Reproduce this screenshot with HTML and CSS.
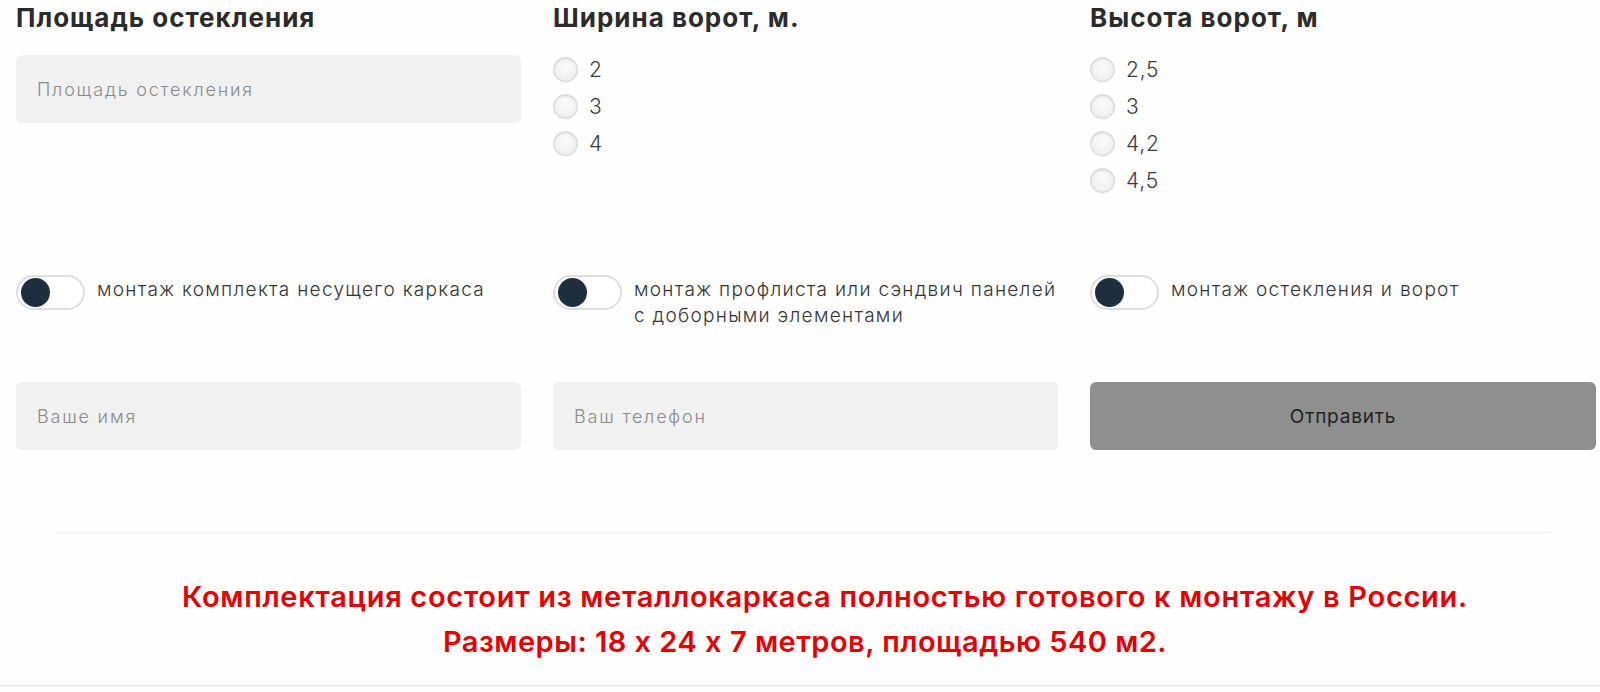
FILE: index.html
```html
<!DOCTYPE html>
<html lang="ru">
<head>
<meta charset="utf-8">
<link rel="stylesheet" href="styles.css">
</head>
<body>
<div class="page">
  <div class="grid row1">
    <div class="col">
      <h3 class="title">Площадь остекления</h3>
      <div class="field field-top"><span class="ph">Площадь остекления</span></div>
    </div>
    <div class="col">
      <h3 class="title">Ширина ворот, м.</h3>
      <div class="radios">
        <div class="radio"><span class="dot"></span><span class="rl">2</span></div>
        <div class="radio"><span class="dot"></span><span class="rl">3</span></div>
        <div class="radio"><span class="dot"></span><span class="rl">4</span></div>
      </div>
    </div>
    <div class="col">
      <h3 class="title">Высота ворот, м</h3>
      <div class="radios">
        <div class="radio"><span class="dot"></span><span class="rl">2,5</span></div>
        <div class="radio"><span class="dot"></span><span class="rl">3</span></div>
        <div class="radio"><span class="dot"></span><span class="rl">4,2</span></div>
        <div class="radio"><span class="dot"></span><span class="rl">4,5</span></div>
      </div>
    </div>
  </div>

  <div class="grid row2">
    <div class="toggle-item"><span class="toggle"><span class="knob"></span></span><span class="tl">монтаж комплекта несущего каркаса</span></div>
    <div class="toggle-item"><span class="toggle"><span class="knob"></span></span><span class="tl">монтаж профлиста или сэндвич панелей<br>с доборными элементами</span></div>
    <div class="toggle-item"><span class="toggle"><span class="knob"></span></span><span class="tl">монтаж остекления и ворот</span></div>
  </div>

  <div class="grid row3">
    <div class="field"><span class="ph">Ваше имя</span></div>
    <div class="field"><span class="ph">Ваш телефон</span></div>
    <div class="btn">Отправить</div>
  </div>

  <div class="divider"></div>

  <div class="note">
    <p class="note-l1">Комплектация состоит из металлокаркаса полностью готового к монтажу в России.</p>
    <p class="note-l2">Размеры: 18 х 24 х 7 метров, площадью 540 м2.</p>
  </div>
</div>
</body>
</html>
```

FILE: styles.css
```css
* { box-sizing: border-box; }
html, body { margin: 0; padding: 0; background: #fefefe; }
body { font-family: "Inter", "Liberation Sans", sans-serif; color: #333; }

.page {
  width: 1600px;
  border-bottom: 1px solid #e2e2e8;
  padding-bottom: 21px;
}

.grid {
  display: grid;
  grid-template-columns: 505px 505px 506px;
  column-gap: 32px;
  padding-left: 16px;
}

.title {
  margin: 0;
  height: 36px;
  line-height: 36px;
  font-size: 26px;
  font-weight: 700;
  color: #2b2b2b;
  letter-spacing: 1px;
}

.field {
  height: 68px;
  background: #f1f1f1;
  border-radius: 6px;
  display: flex;
  align-items: center;
  padding-left: 21px;
}
.field-top { margin-top: 19px; }
.ph { font-size: 18px; color: #8a8a8a; font-weight: 300; letter-spacing: 1.8px; }

.radios { margin-top: 15px; display: flex; flex-direction: column; }
.radio { height: 37px; display: flex; align-items: center; }
.dot {
  width: 25px; height: 25px; border-radius: 50%;
  border: 1px solid #d4d4d4;
  background: radial-gradient(circle at 50% 40%, #fbfbfb 0%, #f1f1f1 60%, #e6e6e6 100%);
  box-shadow: inset 0 1px 2px rgba(0,0,0,0.12), 0 1px 1px rgba(0,0,0,0.05);
}
.rl { margin-left: 11px; font-size: 21px; color: #3a3a3a; font-weight: 300; letter-spacing: 0.8px; }

.row2 { margin-top: 76px; }
.toggle-item { display: flex; align-items: flex-start; }
.toggle {
  flex: none;
  width: 69px; height: 35px;
  border: 2px solid #dedede;
  border-radius: 18px;
  background: #fff;
  display: flex; align-items: center;
  padding-left: 3px;
}
.knob { width: 29px; height: 29px; border-radius: 50%; background: #1e2e3f; }
.tl { margin-left: 12px; margin-top: 2px; font-size: 19px; line-height: 26px; color: #333; font-weight: 300; letter-spacing: 1.3px; }

.row3 { margin-top: 53px; }
.btn {
  height: 68px;
  background: #8f8f8f;
  border-radius: 6px;
  display: flex; align-items: center; justify-content: center;
  font-size: 19px; color: #222; letter-spacing: 0.8px; font-weight: 400;
}

.divider {
  margin: 82px 0 0 56px;
  width: 1495px;
  height: 1px;
  background: #f0f0f0;
}

.note {
  margin-top: 41px;
  text-align: center;
  color: #e60000;
  font-size: 29px;
  line-height: 45px;
  font-weight: 600;
  letter-spacing: 0.5px;
}
.note p { margin: 0; }
.note-l1 { padding-left: 50px; letter-spacing: 0.7px; }
.note-l2 { padding-left: 10px; }
```
